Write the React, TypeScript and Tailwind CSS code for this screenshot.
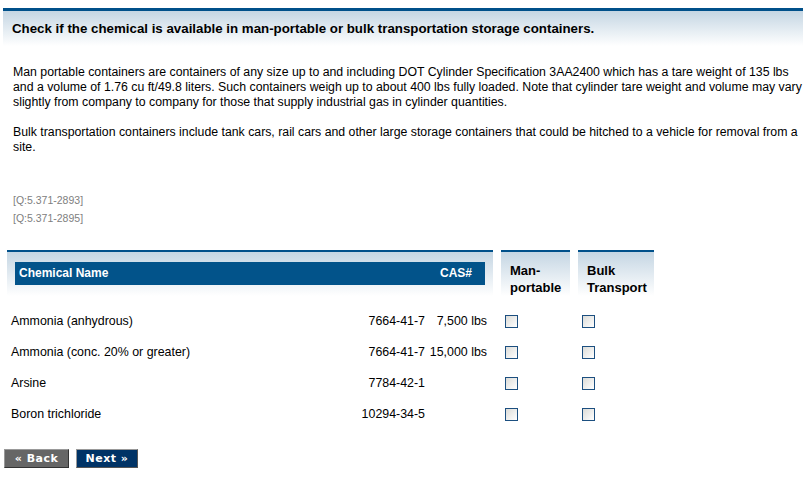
import React from "react";

const rows = [
  { name: "Ammonia (anhydrous)", cas: "7664-41-7", qty: "7,500 lbs" },
  { name: "Ammonia (conc. 20% or greater)", cas: "7664-41-7", qty: "15,000 lbs" },
  { name: "Arsine", cas: "7784-42-1", qty: "" },
  { name: "Boron trichloride", cas: "10294-34-5", qty: "" },
];

function Box() {
  return (
    <div className="w-[13px] h-[13px] border border-[#1c4f80] bg-gradient-to-br from-[#dcdcd8] to-white" />
  );
}

export default function App() {
  return (
    <div
      className="w-[806px] h-[483px] bg-white text-black text-[12px] leading-[17px] overflow-hidden"
      style={{ fontFamily: '"Liberation Sans", Arial, sans-serif' }}
    >
      <div className="pt-[8px] pl-[3px] pr-[3px]">
        <div className="border-t-[3px] border-[#00508a] bg-gradient-to-b from-[#c5d6e3] to-white h-[38px] pl-[9px] pt-[9px] font-bold text-[13.3px]">
          Check if the chemical is available in man-portable or bulk transportation storage containers.
        </div>
      </div>
      <div className="pl-[13px] pr-[3px] pt-[19px] text-[12.3px] leading-[15px] whitespace-nowrap">
        <p>
          Man portable containers are containers of any size up to and including DOT Cylinder Specification 3AA2400 which has a tare weight of 135 lbs
          <br />
          and a volume of 1.76 cu ft/49.8 liters. Such containers weigh up to about 400 lbs fully loaded. Note that cylinder tare weight and volume may vary
          <br />
          slightly from company to company for those that supply industrial gas in cylinder quantities.
        </p>
        <p className="mt-[15px]">
          Bulk transportation containers include tank cars, rail cars and other large storage containers that could be hitched to a vehicle for removal from a
          <br />
          site.
        </p>
        <div className="mt-[36px] text-[10.5px] leading-[18px] text-[#808080]">
          <div>[Q:5.371-2893]</div>
          <div>[Q:5.371-2895]</div>
        </div>
      </div>
      <div className="pl-[7px] mt-[23px] flex gap-[8px]">
        <div className="w-[486px] h-[46px] border-t-[2px] border-[#00508a] bg-gradient-to-b from-[#c5d6e3] to-white pt-[10px] pl-[8px] pr-[8px]">
          <div className="h-[23px] bg-[#02538a] text-white font-bold flex items-center justify-between pl-[4px] pr-[13px]">
            <span>Chemical Name</span>
            <span>CAS#</span>
          </div>
        </div>
        <div className="w-[69px] h-[46px] border-t-[2px] border-[#00508a] bg-gradient-to-b from-[#c5d6e3] to-white pl-[9px] pt-[10px] font-bold text-[13px] leading-[17px]">
          Man-
          <br />
          portable
        </div>
        <div className="w-[76px] h-[46px] border-t-[2px] border-[#00508a] bg-gradient-to-b from-[#c5d6e3] to-white pl-[9px] pt-[10px] font-bold text-[13px] leading-[17px]">
          Bulk
          <br />
          Transport
        </div>
      </div>
      <div className="pl-[11px] mt-[17px] flex flex-col gap-[14px] text-[12.4px]">
        {rows.map((r) => (
          <div key={r.name} className="flex items-center h-[17px]">
            <div className="w-[350px]">{r.name}</div>
            <div className="w-[64px] text-right">{r.cas}</div>
            <div className="w-[62px] text-right">{r.qty}</div>
            <div className="w-[18px]" />
            <Box />
            <div className="w-[64px]" />
            <Box />
          </div>
        ))}
      </div>
      <div className="pl-[4px] mt-[26px] flex gap-[7px]">
        <button
          className="w-[65px] h-[19px] bg-[#666666] text-white font-bold text-[11px] leading-[15px] border border-t-[#999] border-l-[#999] border-r-[#333] border-b-[#333] tracking-[0.5px]"
          style={{ fontFamily: '"DejaVu Sans", Verdana, sans-serif' }}
        >
          « Back
        </button>
        <button
          className="w-[62px] h-[19px] bg-[#003366] text-white font-bold text-[11px] leading-[15px] border border-t-[#999] border-l-[#999] border-r-[#555] border-b-[#555] tracking-[0.5px]"
          style={{ fontFamily: '"DejaVu Sans", Verdana, sans-serif' }}
        >
          Next »
        </button>
      </div>
    </div>
  );
}
